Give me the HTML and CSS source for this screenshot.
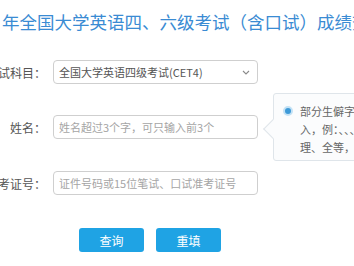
FILE: index.html
```html
<!DOCTYPE html>
<html lang="zh-CN">
  <head>
    <meta charset="UTF-8" />
    <meta name="viewport" content="width=device-width, initial-scale=1.0" />
    <title>成绩查询</title>
    <link rel="stylesheet" href="styles.css">
  </head>
  <body>
    <h1 class="title">年全国大学英语四、六级考试（含口试）成绩查询</h1>

    <form class="form">
      <div class="row">
        <label class="label">考试科目：</label>
        <div class="field select">
          <span>全国大学英语四级考试(CET4)</span>
          <svg class="arrow" width="8" height="5" viewBox="0 0 8 5">
            <path d="M1 1 L4 4 L7 1" fill="none" stroke="#8a8a8a" stroke-width="1.1" />
          </svg>
        </div>
      </div>

      <div class="row">
        <label class="label">姓名：</label>
        <input class="field" type="text" placeholder="姓名超过3个字，可只输入前3个" />
        <!-- 提示框 -->
        <div class="tip">
          <span class="dot"></span>
          <p>部分生僻字无法输<br />入，例：、、、<br />理、全等，<span class="link">请参照</span></p>
        </div>
      </div>

      <div class="row">
        <label class="label">准考证号：</label>
        <input class="field" type="text" placeholder="证件号码或15位笔试、口试准考证号" />
      </div>

      <div class="buttons">
        <button type="button" class="btn">查询</button>
        <button type="reset" class="btn">重填</button>
      </div>
    </form>
  </body>
</html>
```

FILE: styles.css
```css
body {
  margin: 0;
  overflow: hidden;
  background-color: #fff;
  font-family: "Noto Sans CJK SC", "Noto Sans", sans-serif;
}

.title {
  margin: 0;
  padding: 10px 0 0 2px;
  font-size: 17.5px;
  line-height: 24px;
  font-weight: 400;
  color: #3a8bd3;
  white-space: nowrap;
}

.form {
  margin-top: 26px;
}

.row {
  position: relative;
  display: flex;
  align-items: center;
  height: 24px;
  margin-bottom: 31px;
}

.row:nth-child(2) {
  margin-bottom: 32px;
}

.label {
  flex: none;
  width: 46px;
  margin-right: 7px;
  display: flex;
  justify-content: flex-end;
  white-space: nowrap;
  font-size: 12px;
  color: #555;
}

.field {
  box-sizing: border-box;
  width: 205px;
  height: 24px;
  padding: 0 5px;
  border: 1px solid #cfcfcf;
  border-radius: 4px;
  background-color: #fff;
  font-family: "Noto Sans CJK SC", "Noto Sans", sans-serif;
  font-size: 11px;
  color: #555;
  outline: none;
}

.field::placeholder {
  color: #a5a5a5;
}

.select {
  display: flex;
  align-items: center;
  justify-content: space-between;
  padding-right: 7px;
}

.tip {
  position: absolute;
  left: 273px;
  top: -22px;
  box-sizing: border-box;
  width: 200px;
  height: 68px;
  padding: 8px 0 0 26px;
  border: 1px solid #dfe5ea;
  border-radius: 3px;
  background-color: #fbfcfd;
}

.tip::before {
  content: "";
  position: absolute;
  left: -8px;
  top: 28px;
  box-sizing: border-box;
  width: 14px;
  height: 14px;
  border-left: 1px solid #dfe5ea;
  border-bottom: 1px solid #dfe5ea;
  background-color: #fbfcfd;
  transform: rotate(45deg);
}

.dot {
  position: absolute;
  left: 9px;
  top: 12px;
  width: 6px;
  height: 6px;
  border: 2px solid #c4e2f5;
  border-radius: 50%;
  background-color: #3d9ad8;
}

.tip p {
  margin: 0;
  font-size: 11px;
  line-height: 18px;
  color: #666;
  white-space: nowrap;
}

.link {
  color: #3b8cd4;
}

.buttons {
  display: flex;
  gap: 12px;
  margin-left: 79px;
  padding-top: 2px;
}

.btn {
  width: 65px;
  height: 24px;
  border: none;
  border-radius: 3px;
  background-color: #1fa3e4;
  color: #fff;
  font-family: "Noto Sans CJK SC", "Noto Sans", sans-serif;
  font-size: 12px;
}
```
